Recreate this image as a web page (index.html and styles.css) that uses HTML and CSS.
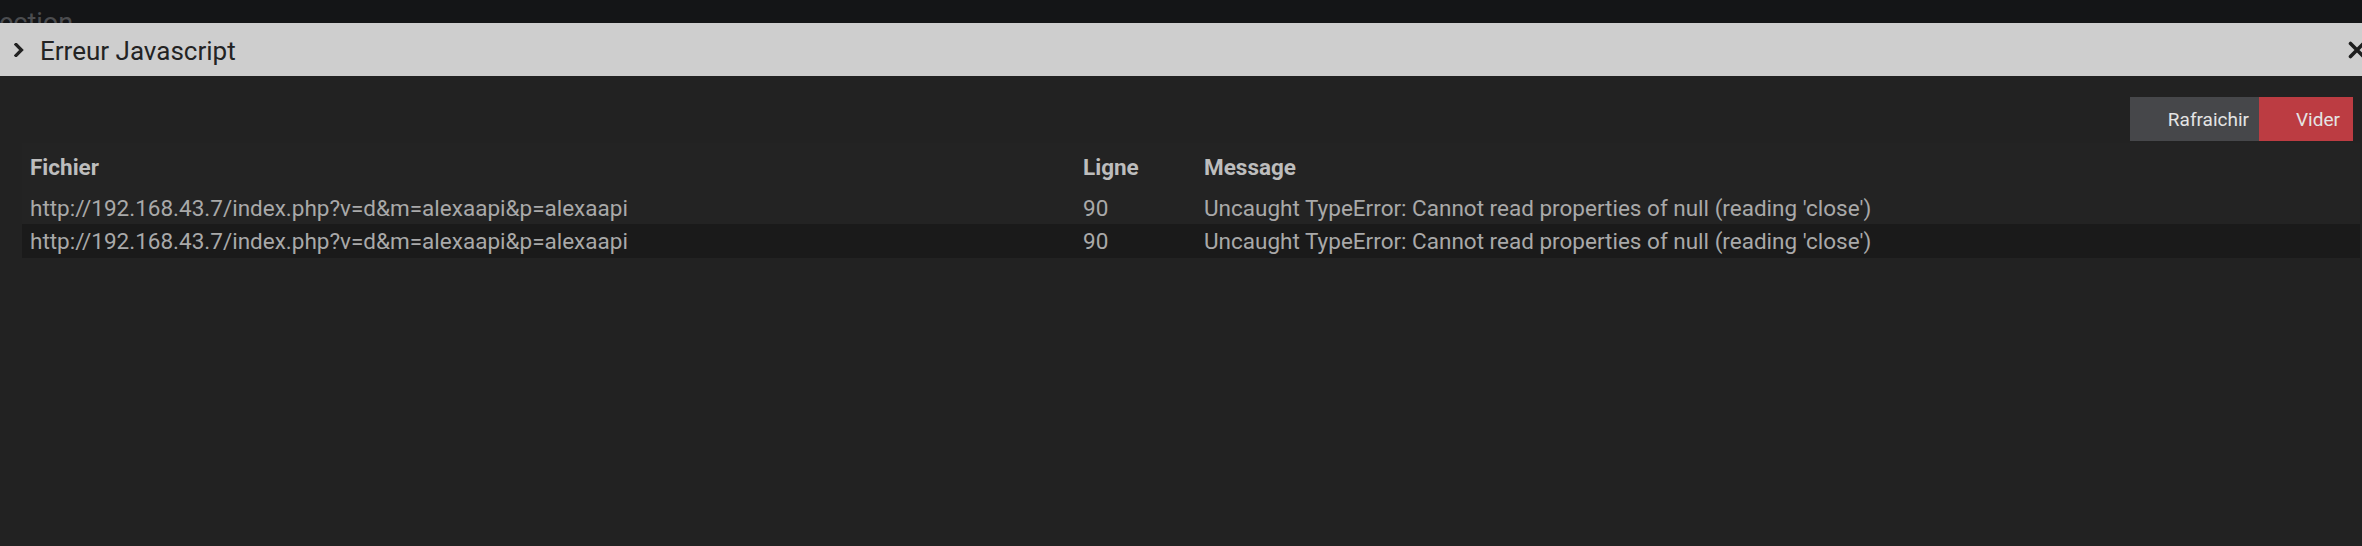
FILE: index.html
```html
<!DOCTYPE html>
<html lang="fr">
<head>
<meta charset="utf-8">
<title>Erreur Javascript</title>
<link rel="stylesheet" href="styles.css">
</head>
<body>
<div class="backdrop-bar"><span class="backdrop-text">ection</span></div>
<div class="modal">
  <div class="modal-header">
    <svg class="chevron" viewBox="0 0 10 14" width="10" height="14"><path d="M2 1.5 L7.5 7 L2 12.5" fill="none" stroke="#222" stroke-width="3.2" stroke-linecap="square"/></svg>
    <span class="modal-title">Erreur Javascript</span>
    <svg class="close" viewBox="0 0 18 18" width="18" height="18"><path d="M2.5 2.5 L15.5 15.5 M15.5 2.5 L2.5 15.5" fill="none" stroke="#1e1e1e" stroke-width="3.6" stroke-linecap="round"/></svg>
  </div>
  <div class="modal-body">
    <div class="toolbar">
      <button class="btn btn-refresh">Rafraichir</button>
      <button class="btn btn-clear">Vider</button>
    </div>
    <table class="errors">
      <thead>
        <tr><th class="c-file">Fichier</th><th class="c-line">Ligne</th><th class="c-msg">Message</th></tr>
      </thead>
      <tbody>
        <tr><td>http://192.168.43.7/index.php?v=d&amp;m=alexaapi&amp;p=alexaapi</td><td>90</td><td>Uncaught TypeError: Cannot read properties of null (reading 'close')</td></tr>
        <tr class="alt"><td>http://192.168.43.7/index.php?v=d&amp;m=alexaapi&amp;p=alexaapi</td><td>90</td><td>Uncaught TypeError: Cannot read properties of null (reading 'close')</td></tr>
      </tbody>
    </table>
  </div>
</div>
</body>
</html>
```
FILE: styles.css
```css
html, body {
  margin: 0;
  padding: 0;
  background: #222222;
  height: 100%;
  overflow: hidden;
  font-family: Roboto, "Liberation Sans", sans-serif;
}
.backdrop-bar {
  height: 23px;
  background: #141517;
  overflow: hidden;
  position: relative;
}
.backdrop-text {
  display: block;
  margin-left: -1px;
  margin-top: 7px;
  font-size: 27px;
  line-height: 32px;
  color: #4b4c4f;
}
.modal-header {
  height: 53px;
  background: #cecece;
  display: flex;
  align-items: center;
  overflow: hidden;
}
.chevron {
  margin-left: 14px;
  flex: none;
}
.modal-title {
  margin-left: 16px;
  margin-top: 2px;
  font-size: 26px;
  color: #232323;
  flex: 1;
}
.close {
  flex: none;
  margin-right: -4px;
  width: 18px;
}
.modal-body {
  padding-top: 21px;
}
.toolbar {
  display: flex;
  justify-content: flex-end;
  padding-right: 9px;
}
.btn {
  border: 0;
  height: 44px;
  font-family: Roboto, "Liberation Sans", sans-serif;
  font-size: 19px;
  color: #e4e4e4;
  padding: 0 11px 0 37px;
  margin: 0;
}
.btn-refresh {
  background: #46474a;
  width: 129px;
  text-align: right;
  padding-right: 10px;
}
.btn-clear {
  background: #bc3c42;
  width: 94px;
  text-align: left;
}
.errors {
  margin: 2px 0 0 22px;
  width: 2338px;
  border-collapse: collapse;
  font-size: 22.5px;
}
.errors th {
  height: 48px;
  padding: 0 8px;
  text-align: left;
  font-weight: 700;
  color: #bdbdbd;
  background: #232323;
}
.errors td {
  padding: 0 8px;
  height: 33px;
  color: #a9a9a9;
  background: #232323;
  white-space: nowrap;
}
.errors tr.alt td {
  background: #1a1a1a;
  height: 34px;
}
.c-file { width: 1037px; }
.c-line { width: 105px; }
```
